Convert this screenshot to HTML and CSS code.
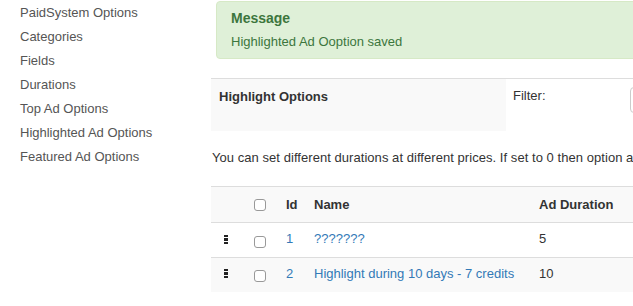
FILE: index.html
```html
<!DOCTYPE html>
<html lang="en">
<head>
    <meta charset="UTF-8">
    <meta name="viewport" content="width=device-width, initial-scale=1.0">
    <title>Highlight Options</title>
    <link rel="stylesheet" href="styles.css">
</head>
<body>
    <div class="page">
        <!-- Sidebar -->
        <ul class="sidebar">
            <li><a href="#">PaidSystem Options</a></li>
            <li><a href="#">Categories</a></li>
            <li><a href="#">Fields</a></li>
            <li><a href="#">Durations</a></li>
            <li><a href="#">Top Ad Options</a></li>
            <li><a href="#">Highlighted Ad Options</a></li>
            <li><a href="#">Featured Ad Options</a></li>
        </ul>

        <!-- Main content -->
        <div class="main">
            <div class="alert">
                <h4 class="alert-heading">Message</h4>
                <div class="alert-message">Highlighted Ad Ooption saved</div>
            </div>

            <div class="toolbar">
                <div class="toolbar-title">Highlight Options</div>
                <div class="toolbar-filter">
                    <label for="filterInput">Filter:</label>
                    <input type="text" id="filterInput" class="filter-input">
                </div>
            </div>

            <p class="description">You can set different durations at different prices. If set to 0 then option always available.</p>

            <table class="list-table">
                <thead>
                    <tr>
                        <th class="col-handle"></th>
                        <th class="col-check"><span class="checkbox"></span></th>
                        <th class="col-id">Id</th>
                        <th class="col-name">Name</th>
                        <th class="col-duration">Ad Duration</th>
                    </tr>
                </thead>
                <tbody>
                    <tr>
                        <td class="col-handle"><span class="handle"></span></td>
                        <td class="col-check"><span class="checkbox"></span></td>
                        <td class="col-id"><a href="#">1</a></td>
                        <td class="col-name"><a href="#">???????</a></td>
                        <td class="col-duration">5</td>
                    </tr>
                    <tr class="row-alt">
                        <td class="col-handle"><span class="handle"></span></td>
                        <td class="col-check"><span class="checkbox"></span></td>
                        <td class="col-id"><a href="#">2</a></td>
                        <td class="col-name"><a href="#">Highlight during 10 days - 7 credits</a></td>
                        <td class="col-duration">10</td>
                    </tr>
                </tbody>
            </table>
        </div>
    </div>
</body>
</html>
```
FILE: styles.css
```css
* {
    margin: 0;
    padding: 0;
    box-sizing: border-box;
}

body {
    font-family: "Liberation Sans", Arial, sans-serif;
    font-size: 13px;
    line-height: 20px;
    color: #333;
    background-color: white;
    overflow: hidden;
}

a {
    text-decoration: none;
    color: #337ab7;
}

.page {
    display: flex;
    width: 100%;
    height: 306px;
}

/* Sidebar */
.sidebar {
    list-style: none;
    width: 211px;
    flex-shrink: 0;
    padding: 1px 0 0 20px;
}

.sidebar li {
    line-height: 24px;
}

.sidebar a {
    color: #555;
}

/* Main */
.main {
    flex: 1;
    min-width: 0;
    white-space: nowrap;
    overflow: hidden;
}

.alert {
    margin: 1px -20px 19px 5px;
    padding: 6px 14px;
    background-color: #dff0d8;
    border: 1px solid #d6e9c6;
    border-radius: 4px;
    color: #3c763d;
}

.alert-heading {
    font-size: 14px;
    font-weight: bold;
}

.alert-message {
    margin-top: 4px;
}

.toolbar {
    display: flex;
    border-top: 1px solid #ddd;
    height: 53px;
}

.toolbar-title {
    flex-shrink: 0;
    width: 295px;
    background-color: #f9f9f9;
    padding: 8px 8px;
    font-weight: bold;
}

.toolbar-filter {
    display: flex;
    flex-shrink: 0;
    align-items: flex-start;
    padding: 7px 0 0 7px;
}

.filter-input {
    flex-shrink: 0;
    margin: 1px 0 0 84px;
    width: 160px;
    height: 26px;
    border: 1px solid #ccc;
    border-radius: 4px;
}

.description {
    margin: 17px 0 18px 1px;
    letter-spacing: 0.05px;
}

/* Table */
.list-table {
    border-collapse: collapse;
    table-layout: fixed;
    width: 560px;
}

.list-table th,
.list-table td {
    text-align: left;
    padding: 0 8px;
    border-top: 1px solid #ddd;
    vertical-align: middle;
}

.list-table thead tr {
    height: 36px;
    background-color: #f9f9f9;
}

.list-table th {
    font-weight: bold;
    padding-top: 1px;
}

.list-table tbody tr {
    height: 35px;
}

.list-table tbody tr.row-alt {
    height: 34px;
    background-color: #f9f9f9;
}

.list-table td {
    padding-bottom: 2px;
}

.col-handle {
    width: 29px;
    padding-left: 13px !important;
}

.col-check {
    width: 38px;
    padding-left: 14px !important;
}

.col-id {
    width: 28px;
}

.col-name {
    width: 225px;
}

.handle {
    display: block;
    width: 4px;
    height: 9px;
    background: linear-gradient(#222 0 2.5px, transparent 2.5px 3.5px, #222 3.5px 6px, transparent 6px 7px, #222 7px 9px);
}

.checkbox {
    display: block;
    width: 12px;
    height: 12px;
    border: 1px solid #999;
    border-radius: 3px;
    background-color: white;
}

td .checkbox {
    margin-top: 5px;
}
```
